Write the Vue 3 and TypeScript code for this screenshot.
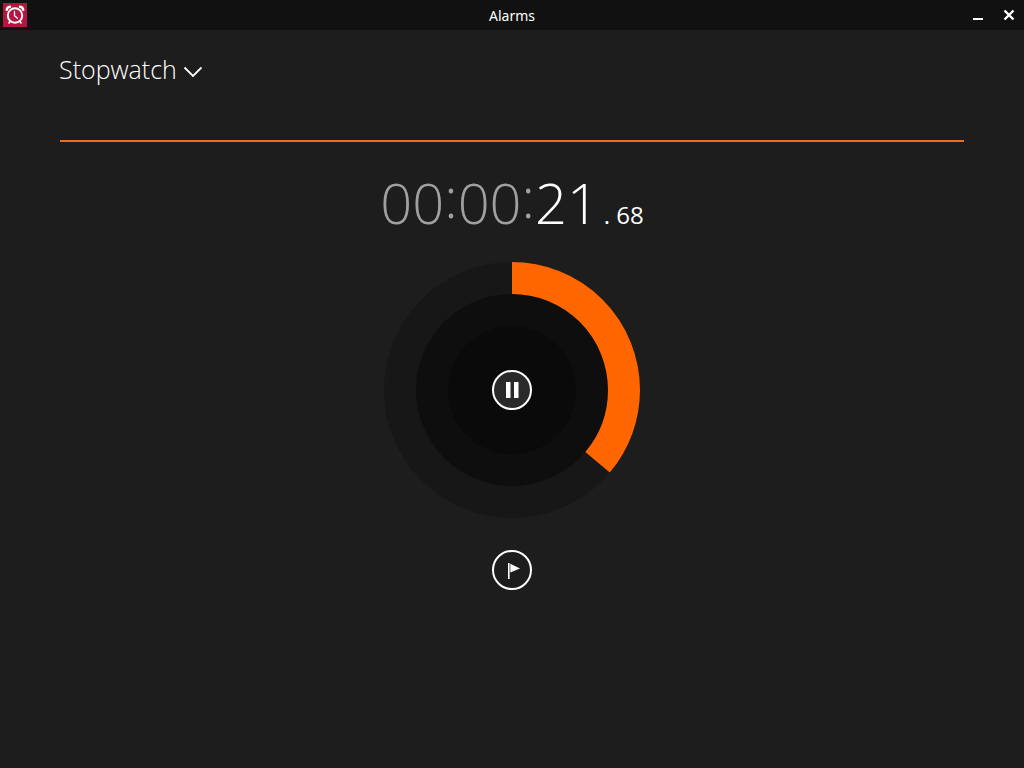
<script setup lang="ts">
import { computed, ref } from 'vue'

const elapsed = ref(21.68)
const radius = 112
const circumference = 2 * Math.PI * radius

const pad = (n: number): string => String(n).padStart(2, '0')

const hours = computed(() => pad(Math.floor(elapsed.value / 3600)))
const minutes = computed(() => pad(Math.floor(elapsed.value / 60) % 60))
const seconds = computed(() => pad(Math.floor(elapsed.value) % 60))
const hundredths = computed(() => pad(Math.round(elapsed.value * 100) % 100))
const dash = computed(() => {
  const swept = ((elapsed.value % 60) / 60) * circumference
  return `${swept} ${circumference}`
})
</script>

<template>
  <div class="app">
    <header class="titlebar">
      <svg class="logo" viewBox="0 0 24 24" aria-hidden="true">
        <rect width="24" height="24" fill="#b5163f" />
        <g fill="none" stroke="#fff" stroke-linecap="round">
          <circle cx="12" cy="12.500" r="7.200" stroke-width="1.900" />
          <path d="M11.500 8.500v4.300l3 2.400" stroke-width="1.300" />
          <path d="M3.800 6.800C4 5 5.300 3.900 7 3.700M20.200 6.800C20 5 18.700 3.900 17 3.700" stroke-width="2.400" />
          <path d="M7 18.500l-1 1.500M17 18.500l1 1.500" stroke-width="1.600" />
        </g>
      </svg>
      <span class="app-name">Alarms</span>
      <div class="window-buttons">
        <button type="button" aria-label="Minimize">
          <svg viewBox="0 0 12 12"><path d="M1 10h10" stroke="#fff" stroke-width="2" /></svg>
        </button>
        <button type="button" aria-label="Close">
          <svg viewBox="0 0 12 12"><path d="M1.500 1.500l9 9M10.500 1.500l-9 9" stroke="#fff" stroke-width="2.400" /></svg>
        </button>
      </div>
    </header>

    <main class="page">
      <h1 class="heading">
        <button type="button" class="switcher" aria-haspopup="menu">
          Stopwatch
          <svg viewBox="0 0 20 12" aria-hidden="true">
            <path d="M1.500 1.500L10 10l8.500-8.500" fill="none" stroke="#fff" stroke-width="1.800" />
          </svg>
        </button>
      </h1>

      <section class="stopwatch" aria-label="Stopwatch">
        <div class="time" role="timer">
          <span class="main-time"><span class="idle">{{ hours }}<span class="colon">:</span>{{ minutes }}<span class="colon">:</span></span>{{ seconds }}</span>
          <span class="fraction"><span>.</span><span>{{ hundredths }}</span></span>
        </div>

        <div class="dial">
          <svg class="rings" viewBox="0 0 256 256" aria-hidden="true">
            <circle cx="128" cy="128" r="128" fill="#171717" />
            <circle cx="128" cy="128" r="96" fill="#0e0e0e" />
            <circle cx="128" cy="128" r="64" fill="#0a0a0a" />
            <circle
              cx="128" cy="128" :r="radius" fill="none" stroke="#ff6600" stroke-width="32"
              :stroke-dasharray="dash" transform="rotate(-90 128 128)"
            />
          </svg>
          <button type="button" class="round pause" aria-label="Pause">
            <svg viewBox="0 0 40 40"><path d="M14 12h4.500v16H14zM22 12h4.500v16H22z" fill="#fff" /></svg>
          </button>
        </div>

        <button type="button" class="round lap" aria-label="Lap">
          <svg viewBox="0 0 40 40">
            <path d="M16 13h1.600v16H16z" fill="#fff" />
            <path d="M18.300 13.800L28 18.500L18.300 22.500z" fill="#fff" />
          </svg>
        </button>
      </section>
    </main>
  </div>
</template>

<style>
body {
  background: #1d1d1d;
}
</style>

<style scoped>
.app {
  min-height: 100vh;
  background: #1d1d1d;
  color: #fff;
  font-family: "Open Sans", "Noto Sans", sans-serif;
}

button {
  padding: 0;
  border: 0;
  background: none;
  color: inherit;
  font: inherit;
  cursor: pointer;
}

svg {
  display: block;
}

.titlebar {
  display: grid;
  grid-template-columns: 1fr auto 1fr;
  align-items: center;
  height: 30px;
  background: #111;
}

.logo {
  width: 24px;
  height: 24px;
  margin-left: 3px;
}

.app-name {
  padding-top: 1px;
  font-family: "Noto Sans", "Open Sans", sans-serif;
  font-size: 14px;
  line-height: 20px;
}

.window-buttons {
  display: flex;
  justify-content: flex-end;
  gap: 19px;
  padding-right: 9px;
}

.window-buttons svg {
  width: 12px;
  height: 12px;
}

.page {
  padding: 21px 60px 0;
}

.heading {
  margin: 0;
  padding-bottom: 53px;
  border-bottom: 2px solid #f26a1b;
  font-size: 25px;
  font-weight: 300;
  line-height: 36px;
}

.switcher {
  display: flex;
  align-items: center;
  gap: 6px;
  margin-left: -1px;
}

.switcher svg {
  width: 20px;
  height: 12px;
  margin-top: 5px;
}

.stopwatch {
  display: flex;
  flex-direction: column;
  align-items: center;
}

.time {
  display: flex;
  align-items: baseline;
  gap: 5px;
  margin-top: 20px;
  font-weight: 300;
}

.main-time {
  font-size: 56px;
  line-height: 80px;
}

.idle {
  color: #a0a0a0;
}

.colon {
  line-height: 1;
  vertical-align: 6px;
}

.fraction {
  display: flex;
  gap: 6px;
  font-size: 24px;
  font-weight: 400;
  line-height: 32px;
}

.dial {
  display: grid;
  place-items: center;
  width: 256px;
  margin-top: 20px;
}

.dial > * {
  grid-area: 1 / 1;
}

.rings {
  width: 256px;
  height: 256px;
}

.round {
  box-sizing: border-box;
  width: 40px;
  height: 40px;
  border: 2px solid #fff;
  border-radius: 50%;
}

.round svg {
  width: 40px;
  height: 40px;
  margin: -2px;
}

.pause {
  z-index: 1;
  background: #2a2a2a;
}

.lap {
  margin-top: 32px;
}
</style>
